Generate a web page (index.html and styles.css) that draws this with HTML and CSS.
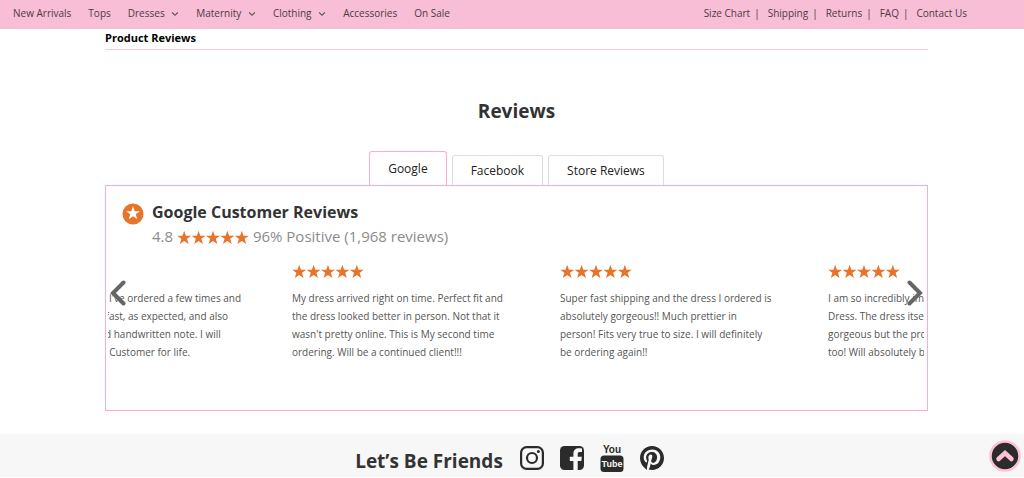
FILE: index.html
```
<!DOCTYPE html>
<html lang="en">
<head>
    <meta charset="UTF-8">
    <meta name="viewport" content="width=device-width, initial-scale=1.0">
    <title>Product Reviews</title>
    <link rel="stylesheet" href="styles.css">
</head>
<body>
    <!-- shared icons -->
    <svg class="sprite" aria-hidden="true">
        <symbol id="star" viewBox="0 0 20 20">
            <path d="M10 0.5l2.4 7h7.4l-5.9 4.4 2.2 7.2-6.1-4.3-6.1 4.3 2.2-7.2L0.2 7.5h7.4z"/>
        </symbol>
        <symbol id="stars" viewBox="0 0 100 20">
            <use href="#star" x="0" width="20" height="20"/>
            <use href="#star" x="20" width="20" height="20"/>
            <use href="#star" x="40" width="20" height="20"/>
            <use href="#star" x="60" width="20" height="20"/>
            <use href="#star" x="80" width="20" height="20"/>
        </symbol>
        <symbol id="caret" viewBox="0 0 8 8">
            <path d="M1.2 2.5L4 5.3l2.8-2.8" fill="none" stroke="#555" stroke-width="1.1"/>
        </symbol>
    </svg>

    <header class="topbar">
        <nav class="main-nav">
            <a href="#">New Arrivals</a>
            <a href="#">Tops</a>
            <a href="#">Dresses <svg class="caret"><use href="#caret"/></svg></a>
            <a href="#">Maternity <svg class="caret"><use href="#caret"/></svg></a>
            <a href="#">Clothing <svg class="caret"><use href="#caret"/></svg></a>
            <a href="#">Accessories</a>
            <a href="#">On Sale</a>
        </nav>
        <nav class="info-nav">
            <a href="#">Size Chart</a><span>|</span>
            <a href="#">Shipping</a><span>|</span>
            <a href="#">Returns</a><span>|</span>
            <a href="#">FAQ</a><span>|</span>
            <a href="#">Contact Us</a>
        </nav>
    </header>

    <main class="container">
        <h3 class="section-title">Product Reviews</h3>

        <h2 class="reviews-title">Reviews</h2>

        <div class="tabs">
            <button type="button" class="tab active">Google</button>
            <button type="button" class="tab">Facebook</button>
            <button type="button" class="tab">Store Reviews</button>
        </div>

        <section class="panel">
            <div class="summary">
                <svg class="badge" viewBox="0 0 22 22">
                    <circle cx="11" cy="11" r="10.5" fill="#e6742a"/>
                    <use href="#star" x="4" y="3" width="14" height="14" fill="#fff"/>
                </svg>
                <div>
                    <h4>Google Customer Reviews</h4>
                    <p class="score">4.8 <svg class="stars"><use href="#stars"/></svg> 96% Positive (1,968 reviews)</p>
                </div>
            </div>

            <div class="carousel">
                <div class="viewport">
                    <div class="track">
                        <article class="slide">
                            <p>An amazing shop, I've ordered a few times and<br>
                            shipping is super fast, as expected, and also<br>
                            included their kind handwritten note. I will<br>
                            be their returning Customer for life.</p>
                        </article>
                        <article class="slide">
                            <svg class="stars"><use href="#stars"/></svg>
                            <p>My dress arrived right on time. Perfect fit and<br>
                            the dress looked better in person. Not that it<br>
                            wasn't pretty online. This is My second time<br>
                            ordering. Will be a continued client!!!</p>
                        </article>
                        <article class="slide">
                            <svg class="stars"><use href="#stars"/></svg>
                            <p>Super fast shipping and the dress I ordered is<br>
                            absolutely gorgeous!! Much prettier in<br>
                            person! Fits very true to size. I will definitely<br>
                            be ordering again!!</p>
                        </article>
                        <article class="slide">
                            <svg class="stars"><use href="#stars"/></svg>
                            <p>I am so incredibly impressed with<br>
                            Dress. The dress itself is<br>
                            gorgeous but the process was<br>
                            too! Will absolutely be back!</p>
                        </article>
                    </div>
                </div>
                <button type="button" class="arrow prev" aria-label="Previous">
                    <svg viewBox="0 0 16 26"><path d="M13.5 2.5L3 13l10.5 10.5"/></svg>
                </button>
                <button type="button" class="arrow next" aria-label="Next">
                    <svg viewBox="0 0 16 26"><path d="M2.5 2.5L13 13 2.5 23.5"/></svg>
                </button>
            </div>
        </section>
    </main>

    <footer class="footer">
        <h2>Let’s Be Friends</h2>
        <div class="social">
            <a href="#" aria-label="Instagram">
                <svg viewBox="0 0 24 28">
                    <rect x="1.1" y="3.1" width="21.8" height="21.8" rx="5.5" fill="none" stroke="#2b2b2b" stroke-width="2.2"/>
                    <circle cx="12" cy="14" r="5" fill="none" stroke="#2b2b2b" stroke-width="2.2"/>
                    <circle cx="18.4" cy="7.6" r="1.5"/>
                </svg>
            </a>
            <a href="#" aria-label="Facebook">
                <svg viewBox="0 0 24 28">
                    <rect x="0" y="2" width="24" height="24" rx="4.5"/>
                    <path d="M22 8.1h-2.2c-1.7 0-2.1.8-2.1 2v2.7h4.1l-.5 4.1h-3.6V26h-4.3v-9.1H9.8v-4.1h3.6V9.7c0-3.5 2.2-5.4 5.3-5.4 1.5 0 2.8.1 3.3.2z" fill="#f7f7f7"/>
                </svg>
            </a>
            <a href="#" aria-label="YouTube">
                <svg viewBox="0 0 24 28">
                    <text x="12" y="9" class="yt you">You</text>
                    <rect x="0.5" y="11.5" width="23" height="16.5" rx="3.5"/>
                    <text x="12" y="23" class="yt tube">Tube</text>
                </svg>
            </a>
            <a href="#" aria-label="Pinterest">
                <svg viewBox="0 0 24 28">
                    <path d="M24 14c0 6.6-5.4 12-12 12-1.2 0-2.3-.2-3.4-.5.5-.7 1-1.7 1.3-2.6l.8-3.3c.4.8 1.6 1.5 2.9 1.5 3.9 0 6.7-3.6 6.7-8 0-4.3-3.5-7.5-8-7.5-5.6 0-8.6 3.8-8.6 7.9 0 1.9 1 4.3 2.6 5 .3.1.4.1.4-.2l.4-1.5c0-.1 0-.3-.1-.4-.5-.6-.9-1.8-.9-2.9 0-2.8 2.1-5.5 5.7-5.5 3.1 0 5.3 2.1 5.3 5.1 0 3.4-1.7 5.8-4 5.8-1.2 0-2.2-1-1.9-2.3.4-1.5 1.1-3.1 1.1-4.2 0-1-.5-1.8-1.6-1.8-1.3 0-2.3 1.3-2.3 3.1 0 1.1.4 1.9.4 1.9l-1.6 6.6c-.3 1.1-.2 2.7-.1 3.7C2.9 23.2 0 18.9 0 14 0 7.4 5.4 2 12 2s12 5.4 12 12z"/>
                </svg>
            </a>
        </div>
    </footer>

    <button type="button" class="to-top" aria-label="Back to top">
        <svg viewBox="0 0 32 32">
            <circle cx="16" cy="16" r="14.5" fill="#2b2b2b" stroke="#ffc0d8" stroke-width="2.5"/>
            <path d="M9.5 19l6.5-6 6.5 6" fill="none" stroke="#ffc0d8" stroke-width="4.5" stroke-linecap="round"/>
        </svg>
    </button>
</body>
</html>
```
FILE: styles.css
```
* {
    margin: 0;
    padding: 0;
    box-sizing: border-box;
}

body {
    font-family: 'Open Sans', 'Liberation Sans', sans-serif;
    font-size: 10px;
    color: #333;
    background: #fff;
}

a {
    color: inherit;
    text-decoration: none;
}

button {
    font-family: inherit;
    cursor: pointer;
}

.sprite {
    display: none;
}

/* top bar */
.topbar {
    display: flex;
    justify-content: space-between;
    height: 29px;
    padding: 0 57px 3px 13px;
    background: #f7bed5;
    color: #4d3b43;
}

.main-nav,
.info-nav {
    display: flex;
    align-items: center;
}

.main-nav {
    gap: 17px;
}

.caret {
    width: 8px;
    height: 8px;
    margin-left: 4px;
    vertical-align: -1px;
}

.info-nav span {
    margin: 0 8px 0 4px;
}

/* content */
.container {
    padding: 0 96px 0 105px;
}

.section-title {
    height: 21px;
    border-bottom: 1px solid #ffc4d6;
    font-size: 11px;
    line-height: 18px;
    color: #000;
}

.reviews-title {
    margin: 48px 0 26px;
    font-size: 19px;
    line-height: 27px;
    text-align: center;
}

.tabs {
    display: flex;
    justify-content: center;
    align-items: flex-end;
    gap: 5px;
}

.tab {
    height: 30px;
    padding: 0 18px 1px;
    border: 1px solid #ddd;
    border-bottom: 0;
    border-radius: 3px 3px 0 0;
    background: #fff;
    font-size: 12px;
    color: #222;
}

.tab.active {
    height: 34px;
    border-color: #ffaad2;
}

.panel {
    height: 226px;
    padding: 16px 3px 0 2px;
    border: 1px solid #ffaad2;
}

.summary {
    display: flex;
    gap: 8px;
    padding-left: 14px;
}

.badge {
    width: 22px;
    height: 22px;
    margin-top: 1px;
}

.summary h4 {
    font-size: 16px;
    line-height: 20px;
}

.score {
    font-size: 15px;
    line-height: 28px;
    color: #8c8c8c;
}

.stars {
    width: 72px;
    height: 15px;
    fill: #e6742a;
}

.score .stars {
    vertical-align: -3px;
}

/* carousel */
.carousel {
    position: relative;
    margin-top: 14px;
}

.viewport {
    overflow: hidden;
}

.track {
    display: flex;
    align-items: flex-end;
    margin-left: -84px;
}

.slide {
    flex: 0 0 268px;
    line-height: 18px;
    color: #555;
    white-space: nowrap;
}

.slide .stars {
    display: block;
    margin-bottom: 10px;
}

.arrow {
    position: absolute;
    top: 16px;
    width: 16px;
    height: 26px;
    border: 0;
    background: none;
}

.arrow svg {
    display: block;
    fill: none;
    stroke: #666;
    stroke-width: 4;
    stroke-linecap: round;
}

.prev {
    left: 2px;
}

.next {
    right: 1px;
}

/* footer */
.footer {
    display: flex;
    justify-content: center;
    gap: 17px;
    height: 43px;
    margin-top: 23px;
    padding-right: 5px;
    background: #f7f7f7;
}

.footer h2 {
    padding-top: 14px;
    font-size: 19px;
    line-height: 27px;
}

.social {
    display: flex;
    gap: 16px;
    padding-top: 10px;
}

.social svg {
    display: block;
    width: 24px;
    height: 28px;
    fill: #2b2b2b;
}

.yt {
    font-family: 'Liberation Sans', sans-serif;
    font-weight: bold;
    text-anchor: middle;
}

.you {
    font-size: 10px;
}

.tube {
    font-size: 9px;
    fill: #f7f7f7;
}

.to-top {
    position: fixed;
    right: 3px;
    bottom: 6px;
    width: 32px;
    height: 32px;
    border: 0;
    background: none;
}

.to-top svg {
    display: block;
}
```
